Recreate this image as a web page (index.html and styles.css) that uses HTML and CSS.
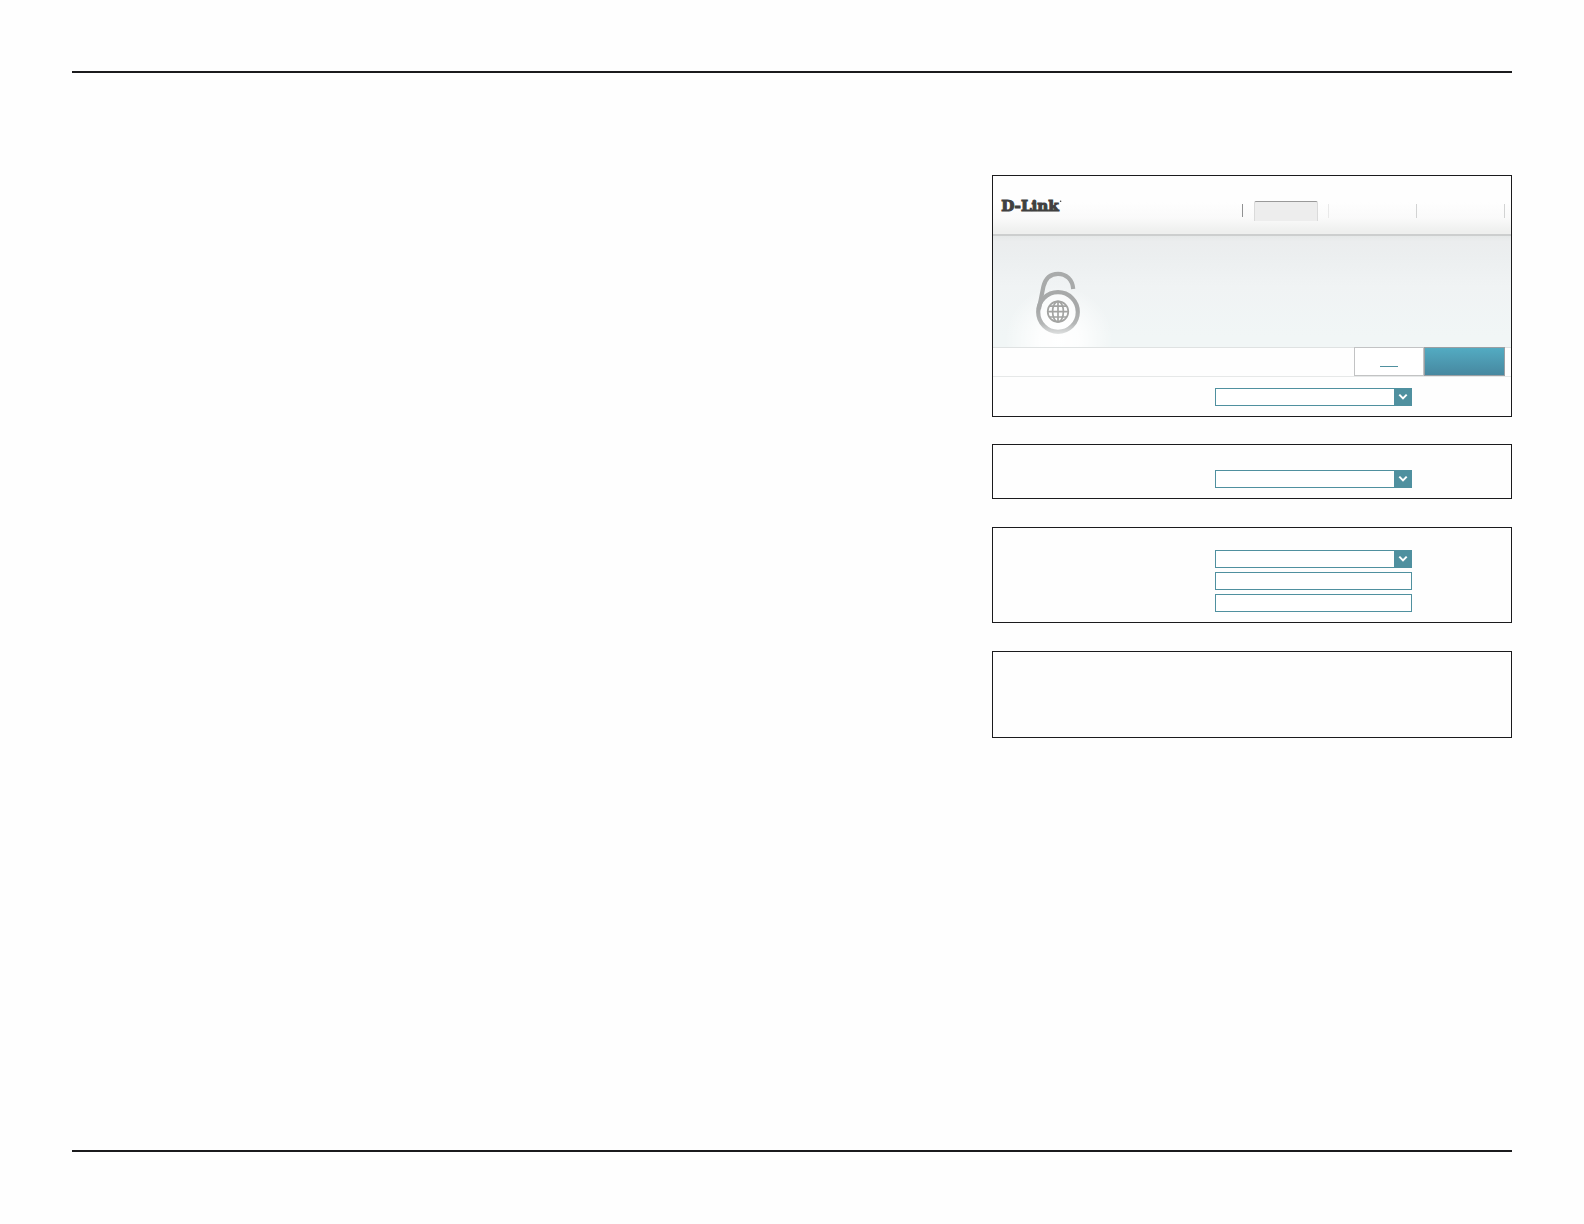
FILE: index.html
```
<!DOCTYPE html>
<html lang="en">
<head>
  <meta charset="UTF-8"/>
  <meta name="viewport" content="width=device-width,initial-scale=1"/>
  <title>D-Link</title>
  <link rel="stylesheet" href="styles.css">
</head>
<body>

  <!-- Shared arrow for the dropdowns -->
  <svg width="0" height="0" class="defs">
    <symbol id="arrow" viewBox="0 0 18 18">
      <path d="M5.3 6.6 L9 10.4 L12.7 6.6" fill="none" stroke="#fff" stroke-width="2"/>
    </symbol>
  </svg>

  <main class="page">
    <div class="panels">

      <section class="panel panel-main">
        <header class="topbar">
          <svg class="logo" width="64" height="18">
            <text x="0.2" y="10.3" textLength="57.6" lengthAdjust="spacingAndGlyphs">D-Link</text>
            <circle cx="59.6" cy="0.2" r="0.8"/>
          </svg>
          <nav class="tabs">
            <span class="divider dark"></span>
            <span class="tab active"></span>
            <span class="divider faint"></span>
            <span class="tab"></span>
            <span class="divider"></span>
            <span class="tab"></span>
            <span class="divider"></span>
          </nav>
        </header>

        <div class="hero">
          <svg class="hero-icon" width="48" height="68" viewBox="0 0 48 68">
            <defs>
              <linearGradient id="fade" gradientUnits="userSpaceOnUse" x1="0" y1="2" x2="0" y2="66">
                <stop offset="0" stop-color="#a9abab"/>
                <stop offset="0.6" stop-color="#a6a8a8"/>
                <stop offset="0.82" stop-color="#b4b6b6"/>
                <stop offset="1" stop-color="#e2e4e4"/>
              </linearGradient>
            </defs>
            <circle cx="24" cy="43" r="19.8" fill="#fff" fill-opacity="0.5" stroke="url(#fade)" stroke-width="4.2"/>
            <path d="M4.9 40 L9.4 17.5 C11.5 9 17 4.8 24 4.8 C32 4.8 38.5 10.5 39.2 20" fill="none" stroke="url(#fade)" stroke-width="4.2"/>
            <g fill="none" stroke="#a3a4a2" stroke-width="1.7">
              <circle cx="24" cy="42.6" r="10.3"/>
              <ellipse cx="24" cy="42.6" rx="5.4" ry="10.3"/>
              <path d="M24 32.3 V52.9 M13.7 42.6 H34.3 M15.2 37.2 H32.8 M15.2 48 H32.8"/>
            </g>
          </svg>
        </div>

        <div class="actions">
          <a class="btn btn-link"><span></span></a>
          <a class="btn btn-save"></a>
        </div>

        <div class="fields">
          <div class="select"><svg><use href="#arrow"/></svg></div>
        </div>
      </section>

      <section class="panel panel-dns">
        <div class="fields">
          <div class="select"><svg><use href="#arrow"/></svg></div>
        </div>
      </section>

      <section class="panel panel-manual">
        <div class="fields">
          <div class="select"><svg><use href="#arrow"/></svg></div>
          <div class="field"></div>
          <div class="field"></div>
        </div>
      </section>

      <section class="panel panel-empty"></section>

    </div>
  </main>

</body>
</html>
```

FILE: styles.css
```
:root {
  --ink: #1b1b1d;
  --teal: #4f909f;
}

* { box-sizing: border-box; margin: 0; padding: 0; }

body {
  background: #fefefe;
  height: 1224px;
  padding: 71px 72px 72px;
  font-family: "DejaVu Serif", serif;
  overflow: hidden;
}

svg { display: block; }

.defs { position: absolute; }

.page {
  height: 1081px;
  border-top: 2px solid var(--ink);
  border-bottom: 2px solid var(--ink);
  padding-top: 102px;
}

.panels {
  width: 520px;
  margin-left: auto;
  display: flex;
  flex-direction: column;
  gap: 28px;
}

.panel {
  border: 1px solid var(--ink);
}

.panel-main { height: 242px; margin-bottom: -1px; }
.panel-dns { height: 55px; }
.panel-manual { height: 96px; }
.panel-empty { height: 87px; }

/* top bar */
.topbar {
  height: 60px;
  display: flex;
  justify-content: space-between;
  align-items: flex-start;
  padding: 25px 6px 0 8px;
  background: linear-gradient(#fefefe 45%, #fafafa 72%, #eeefee 96%);
  border-bottom: 2px solid #cccece;
}

.logo {
  fill: #404040;
  stroke: #404040;
  stroke-width: 1.1;
  font-size: 15px;
  font-weight: bold;
  overflow: visible;
}

.logo circle { stroke: none; }

.tabs {
  display: flex;
}

.divider {
  width: 1px;
  height: 14px;
  margin-top: 3px;
  background: #d2d3d3;
}

.divider.dark {
  height: 13px;
  margin-right: 11px;
  background: #909192;
}

.divider.faint {
  margin-left: 10px;
  background: #e9e9e9;
}

.tab {
  width: 87px;
}

.tab.active {
  width: 64px;
  height: 20px;
  background: #ededed;
  border: 1px solid #dadada;
  border-top-color: #999;
  border-bottom: 0;
  border-radius: 2px 2px 0 0;
}

/* hero */
.hero {
  height: 111px;
  padding: 33px 0 0 41px;
  background:
    radial-gradient(circle at 66px 104px, #fff 0, rgba(255,255,255,0.85) 20px, rgba(255,255,255,0) 54px),
    linear-gradient(#e5e8e8, #ebedee 5%, #eceff0 20%, #f0f3f4 45%, #f1f6f6 90%);
}

/* buttons */
.actions {
  height: 30px;
  display: flex;
  justify-content: flex-end;
  padding-right: 6px;
  border-top: 1px solid #dfe2e2;
  border-bottom: 1px solid #e6e8e8;
}

.btn {
  height: 29px;
  margin-top: -1px;
}

.btn-link {
  width: 70px;
  background: #fff;
  border: 1px solid #c2c3c4;
  padding: 18px 25px 0;
}

.btn-link span {
  display: block;
  height: 1px;
  background: var(--teal);
}

.btn-save {
  width: 81px;
  background: linear-gradient(#53abc2, #4788a0);
  border: 1px solid #999fa3;
}

/* form fields */
.fields {
  width: 197px;
  margin-left: 222px;
  display: flex;
  flex-direction: column;
  gap: 4px;
}

.panel-main .fields { margin-top: 11px; }
.panel-dns .fields { margin-top: 25px; }
.panel-manual .fields { margin-top: 22px; }

.select, .field {
  height: 18px;
  border: 1px solid var(--teal);
  background: #fff;
}

.select svg {
  width: 18px;
  height: 18px;
  margin: -1px -1px 0 auto;
  background: var(--teal);
}
```
